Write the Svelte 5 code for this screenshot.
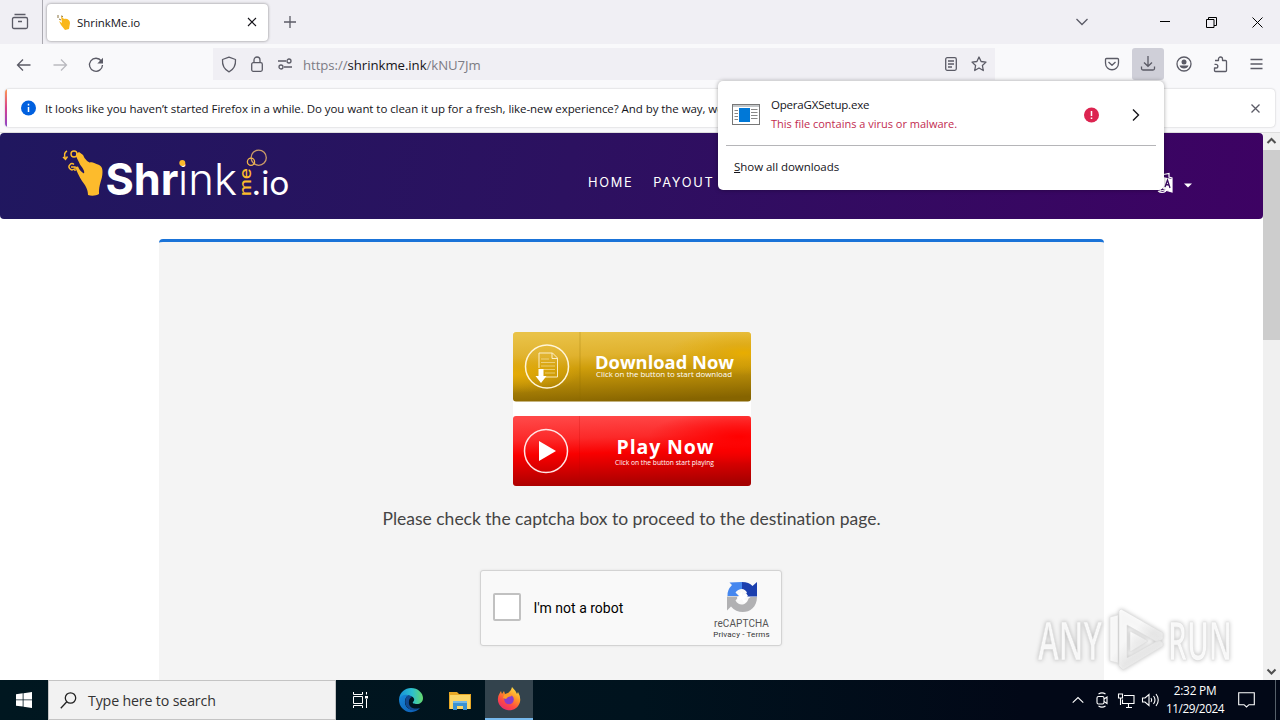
<script>
  const notice =
    "It looks like you haven’t started Firefox in a while. Do you want to clean it up for a fresh, like-new experience? And by the way, welcome back!";
  const menu = ['HOME', 'PAYOUT'];
</script>

<div class="screen">
  <div class="tabs">
    <div class="view">
      <svg width="18" height="18" viewBox="0 0 18 18" class="ic"><path d="M3.5 1.5h11M3 4.5h12q1.500 0 1.500 1.500v8q0 1.500-1.500 1.500H3q-1.500 0-1.500-1.500V6q0-1.500 1.500-1.500zM7 8.500h4" /></svg>
    </div>
    <div class="tab">
      <svg width="14" height="16" viewBox="0 0 14 16"><path d="M1 4V1M4 2l2 .5M2 5l2 1" stroke="#8a7440" stroke-width="1" fill="none" /><path d="M4 2l3 3c3-1 6 1 6 4l-1 6-4 1-4-5-2-4 3 2z" fill="#f9b719" /></svg>
      <span class="tabname">ShrinkMe.io</span>
      <svg width="10" height="10" viewBox="0 0 10 10" class="dark"><path d="M1 1l8 8M9 1L1 9" /></svg>
    </div>
    <svg class="plus ic" width="12" height="12" viewBox="0 0 12 12"><path d="M6 0v12M0 6h12" /></svg>
    <div class="grow"></div>
    <svg class="chev ic" width="14" height="8" viewBox="0 0 14 8"><path d="M1.500 1l5.500 5.500L12.500 1" /></svg>
    <svg class="min blk" width="10" height="10" viewBox="0 0 10 10"><path d="M0 4.500h10" /></svg>
    <svg class="restore blk" width="11" height="11" viewBox="0 0 11 11"><path d="M.5 2.500h7.500v8H.5zM2.500 2.500V.5h8v8H8" /></svg>
    <svg class="close blk" width="11" height="11" viewBox="0 0 11 11"><path d="M.5.5l10 10M10.500.5l-10 10" /></svg>
  </div>

  <div class="bar">
    <svg class="back ic" width="16" height="14" viewBox="0 0 16 14"><path d="M14.500 7H1.500M7 1.500L1.500 7 7 12.500" /></svg>
    <svg class="fwd ic" width="16" height="14" viewBox="0 0 16 14"><path d="M1.500 7h13M9 1.500L14.500 7 9 12.500" /></svg>
    <svg class="reload ic" width="16" height="16" viewBox="0 0 16 16"><path d="M13.300 4A6.500 6.500 0 1 0 14.500 8" /><path d="M15 .8v5.700H9.300z" fill="#5b5b66" stroke="none" /></svg>
    <div class="url">
      <svg width="16" height="17" viewBox="0 0 16 17" class="ic"><path d="M8 1.200l6.500 2.300c.4 5.500-1.500 9.800-6.500 12.300C3 13.300 1.100 9 1.500 3.500z" stroke-linejoin="round" /></svg>
      <svg width="12" height="16" viewBox="0 0 12 16" class="ic lock"><rect x=".7" y="6.700" width="10.600" height="8.600" rx="1.500" /><path d="M3 6.500V4a3 3 0 0 1 6 0v2.500" /></svg>
      <svg width="16" height="12" viewBox="0 0 16 12" class="ic perm"><path d="M1 3h8M7 9h8" /><circle cx="12" cy="3" r="2" /><circle cx="4" cy="9" r="2" /></svg>
      <span class="address">https://<b>shrinkme.ink</b>/kNU7Jm</span>
      <div class="grow"></div>
      <svg width="12" height="14" viewBox="0 0 12 14" class="ic"><rect x=".7" y=".7" width="10.600" height="12.600" rx="1.500" /><path d="M3 4h6M3 7h6M3 10h4" /></svg>
      <svg width="16" height="16" viewBox="0 0 16 16" class="ic star"><path d="M8 1l2.100 4.500 4.900.6-3.600 3.400.9 5L8 12l-4.300 2.500.9-5L1 6.100l4.900-.6z" stroke-linejoin="round" /></svg>
    </div>
    <div class="tools">
      <svg width="16" height="14" viewBox="0 0 16 14" class="ic"><path d="M2.500 1.500h11q1 0 1 1V6c0 9-13 9-13 0V2.500q0-1 1-1zM4.500 5L8 8.300 11.500 5" stroke-linejoin="round" /></svg>
      <div class="dl"><svg width="16" height="16" viewBox="0 0 16 16" class="ic"><path d="M8 0v10M4 6.500l4 3.800 4-3.800M1.500 10.500v2q0 1.500 1.500 1.500h10q1.500 0 1.500-1.500v-2" /></svg></div>
      <svg width="16" height="16" viewBox="0 0 16 16" class="ic user"><circle cx="8" cy="8" r="7" /><circle cx="8" cy="6" r="2.500" fill="#5b5b66" stroke="none" /><path d="M3.500 9.500h9c-.8 4-8.200 4-9 0z" fill="#5b5b66" stroke="none" /></svg>
      <svg width="15" height="16" viewBox="0 0 15 16" class="ic ext"><path d="M2 4.500h3.500V3a2 2 0 0 1 4 0v1.500h3q1 0 1 1v9q0 1-1 1H2.500q-1 0-1-1V12H3a1.700 1.700 0 0 0 0-3.700H1.500" stroke-linejoin="round" /></svg>
      <svg width="13" height="11" viewBox="0 0 13 11" class="ic burger"><path d="M.5 .5h12M.5 5h12M.5 9.500h12" /></svg>
    </div>
  </div>

  <div class="info">
    <div class="note">
      <svg width="16" height="16" viewBox="0 0 16 16"><circle cx="8.500" cy="8" r="7.500" fill="#0060df" /><path d="M8.500 7v5M8.500 3.800v1.600" stroke="#fff" stroke-width="1.500" /></svg>
      <span class="notetext">{notice}</span>
      <svg class="noteclose ic" width="9" height="9" viewBox="0 0 9 9"><path d="M.5.5l8 8M8.500.5l-8 8" /></svg>
    </div>
  </div>

  <div class="viewport">
    <div class="site">
      <header>
        <svg class="logo" width="228" height="50" viewBox="0 0 228 50">
          <path d="M14 5L17 3q4 2 5.500 6 2 3 5 4.500c3-1 5 .5 7 1.500 4 1 6 3 6 8 0 8-4 12-3.500 22-3 2-8 2-11 1 0-6-3-10-6-14-3-5-5-9-7-14l3-.5q2 5 6 7c1-2-1-5-4-9-2-5-4-7-4-10z" fill="#fdbb2c" />
          <g fill="none" stroke="#fdbb2c" stroke-width="1.400"><circle cx="12" cy="5" r="3" /><path d="M5 2Q1 4 3.500 10M1 8l2.500 2.500 2-3M12 15.500a3 3 0 1 0 0 4.500M9 18h4v4" /></g>
          <text x="43.500" y="46" class="ls" textLength="73" lengthAdjust="spacingAndGlyphs">Shr</text>
          <text x="116" y="46" class="lt" textLength="59" lengthAdjust="spacingAndGlyphs">ink</text>
          <circle cx="120.300" cy="14" r="3" fill="#fdbb2c" />
          <text class="me" transform="translate(188.500 47) rotate(-90)" textLength="28" lengthAdjust="spacingAndGlyphs">me</text>
          <text x="189.500" y="46" class="lio" textLength="38" lengthAdjust="spacingAndGlyphs">.io</text>
          <g fill="none" stroke="#c99a68" stroke-width="1.300"><circle cx="196.700" cy="8.700" r="7.600" /><circle cx="189" cy="12.700" r="3.600" stroke="#f4b74a" /></g>
        </svg>
        <nav>{#each menu as m}<span>{m}</span>{/each}</nav>
        <div class="lang">
          <svg width="22" height="21" viewBox="0 0 22 21"><path d="M10 2l8-1.500V4l3 1v14l-7-2-5 1zM7 18q4 3 8 0" fill="none" stroke="#fff" stroke-width="1.200" /><path d="M12 4l9 2v13l-9-3z" fill="#fff" /><path d="M14 14l2.500-7 2.500 8M15 11.500l3 .7" fill="none" stroke="#3a0a62" stroke-width="1.300" /></svg>
          <svg class="caret" width="8" height="5" viewBox="0 0 8 5"><path d="M0 .5h8L4 4.500z" fill="#fff" /></svg>
        </div>
      </header>

      <main>
        <div class="buttons">
          <svg width="238" height="70" viewBox="0 0 238 70">
            <defs>
              <linearGradient id="gold" x1=".35" y1="0" x2=".5" y2="1"><stop offset="0" stop-color="#e9c247" /><stop offset=".32" stop-color="#e0b22e" /><stop offset=".5" stop-color="#cf9e0b" /><stop offset="1" stop-color="#866400" /></linearGradient>
              <radialGradient id="goldglow" cx=".97" cy=".3" r=".32"><stop offset="0" stop-color="#e8ad00" /><stop offset=".4" stop-color="#dea607" stop-opacity=".55" /><stop offset="1" stop-color="#e8ad00" stop-opacity="0" /></radialGradient>
              <radialGradient id="goldleft" cx="0" cy=".6" r=".28"><stop offset="0" stop-color="#e7ad08" stop-opacity=".9" /><stop offset="1" stop-color="#e7ad08" stop-opacity="0" /></radialGradient>
              <linearGradient id="red" x1=".4" y1="0" x2=".5" y2="1"><stop offset="0" stop-color="#ff4747" /><stop offset=".3" stop-color="#fc2929" /><stop offset=".52" stop-color="#f90000" /><stop offset="1" stop-color="#a50000" /></linearGradient>
              <radialGradient id="redglow" cx=".95" cy=".3" r=".38"><stop offset="0" stop-color="#f00" /><stop offset=".4" stop-color="#f00" stop-opacity=".6" /><stop offset="1" stop-color="#f00" stop-opacity="0" /></radialGradient>
            </defs>
            <rect width="238" height="69.500" rx="3" fill="url(#gold)" /><rect width="238" height="69.500" rx="3" fill="url(#goldglow)" /><rect width="238" height="69.500" rx="3" fill="url(#goldleft)" />
            <path d="M67 0v69" stroke="#8c6900" stroke-opacity=".3" />
            <g fill="none" stroke="#fff5d8"><circle cx="34" cy="34.500" r="21.500" stroke-width="1.500" /><path d="M26 36V21h13.500l5 5v19H32M39 21v5.500h5" stroke-width=".9" /><path d="M28 27h8M28 30.500h14M28 34h14M29 37.500h13M32 41h10" stroke-width=".7" opacity=".7" /></g>
            <path d="M25.500 37h5v7h3l-5.500 7-5.500-7h3z" fill="#fff" />
            <text x="82" y="37" class="bt" textLength="139" lengthAdjust="spacingAndGlyphs">Download Now</text>
            <text x="83" y="45" class="bs" textLength="136" lengthAdjust="spacingAndGlyphs">Click on the button to start download</text>
          </svg>
          <svg width="238" height="70" viewBox="0 0 238 70">
            <rect width="238" height="70" rx="3" fill="url(#red)" /><rect width="238" height="70" rx="3" fill="url(#redglow)" />
            <path d="M66.500 0v70" stroke="#b00" stroke-opacity=".2" />
            <circle cx="33" cy="35" r="21.500" fill="none" stroke="#ffe5e5" stroke-width="1.500" />
            <path d="M26 25l17 10-17 10z" fill="#fff" />
            <text x="103.500" y="38" class="bt play" textLength="97">Play Now</text>
            <text x="102" y="49" class="bs" textLength="99" lengthAdjust="spacingAndGlyphs">Click on the button start playing</text>
          </svg>
        </div>
        <p>Please check the captcha box to proceed to the destination page.</p>
        <div class="captcha">
          <div class="box"></div>
          <span class="robot">I'm not a robot</span>
          <div class="grow"></div>
          <div class="brand">
            <svg width="32" height="32" viewBox="0 0 32 32">
              <path d="M16 1v7a8 8 0 0 0-6.500 3.500L13 15H1.500Q1 9 6 4L3.500 1.500z" fill="#4587ef" />
              <path d="M16 1c5 0 8 1.500 10.500 4L31 1v14.500H17l4-4Q19 8 16 8z" fill="#1b3fae" />
              <path d="M1 15.500h12l-3.500 4c3 6 11 5.500 13-2l2-1.500H31c0 16-18 19.500-26 9.500l-4 4z" fill="#b1b1b3" />
              <path d="M12 13l4-2v4l4-3 2 3-4 3 3 2-3 2-2-4-4 2-1-4 3-1z" fill="#fff" />
            </svg>
            <span class="re">reCAPTCHA</span>
            <span class="pt">Privacy - Terms</span>
          </div>
        </div>
      </main>
    </div>
    <div class="scroll">
      <svg width="17" height="17" viewBox="0 0 17 17"><path d="M4.500 10l4-4 4 4" fill="none" stroke="#505050" stroke-width="2" /></svg>
      <div class="thumb"></div>
      <div class="grow"></div>
      <svg width="17" height="17" viewBox="0 0 17 17"><path d="M4.500 6.500l4 4 4-4" fill="none" stroke="#505050" stroke-width="2" /></svg>
    </div>
  </div>

  <div class="taskbar">
    <div class="start"><svg width="16" height="16" viewBox="0 0 16 16"><path d="M0 2.300L6.700 1.300v6.200H0zM7.500 1.200L16 0v7.500H7.500zM0 8.300h6.700v6.300L0 13.700zM7.500 8.300H16V16l-8.500-1.300z" fill="#fff" /></svg></div>
    <div class="search">
      <svg width="17" height="17" viewBox="0 0 17 17"><circle cx="10.500" cy="6" r="5.200" /><path d="M6.800 9.800L.8 16.200" /></svg>
      <span>Type here to search</span>
    </div>
    <div class="app">
      <svg width="18" height="16" viewBox="0 0 18 16" fill="none" stroke="#fff"><path d="M1.500 0v2.500h9V0M1.500 16v-2.500h9V16M1.500 4.500h9v7h-9zM14.500 0v2.500M14.500 7v9" /><path d="M13 4h3v2.500h-3z" fill="#fff" stroke="none" /></svg>
    </div>
    <div class="app edgeapp">
      <svg width="24" height="24" viewBox="0 0 24 24">
        <defs><linearGradient id="e1" x1="0" y1=".3" x2="1" y2=".3"><stop offset="0" stop-color="#168fd8" /><stop offset=".55" stop-color="#2cc0cf" /><stop offset="1" stop-color="#65d96c" /></linearGradient><linearGradient id="e2" y2="1"><stop offset="0" stop-color="#1687d9" /><stop offset="1" stop-color="#0d5bb2" /></linearGradient></defs>
        <path d="M0 11C1 4 6 0 12 0c7 0 12 5 12 10 0 4-3 6-6 6-3 0-5-1-4-2 3-3 0-6-4-6-5 0-8 2-10 3z" fill="url(#e1)" />
        <path d="M0 11c2-4 6-5 9-4-3 3-4 7-2 11 3 5 9 4 14 2-4 5-13 6-18 0C1 18 0 15 0 11z" fill="url(#e2)" />
        <path d="M9 7c-3 3-4 8-1 12 4 5 10 3 13 1-7 2-12-1-11-7 0-2 1-3 3-4-1-1-2-2-4-2z" fill="#124a91" />
      </svg>
    </div>
    <div class="app">
      <svg width="22" height="19" viewBox="0 0 22 19"><path d="M0 1h8l2 2h12v15H0z" fill="#e8a825" /><path d="M1 4h20v14H1z" fill="#fbd667" /><path d="M4 11h14v8h-4v-4H8v4H4z" fill="#3a92d2" /><path d="M4 10h14v2H4z" fill="#76b9e6" /></svg>
    </div>
    <div class="app on">
      <svg width="24" height="24" viewBox="0 0 24 24">
        <defs><linearGradient id="f1" x1=".8" y1="0" x2=".2" y2="1"><stop offset="0" stop-color="#ffe647" /><stop offset=".38" stop-color="#ff9426" /><stop offset=".68" stop-color="#ff4b42" /><stop offset="1" stop-color="#e72673" /></linearGradient></defs>
        <path d="M15 0q4 4 5 7l1-2q3 5 2 10c-2 7-8 9-13 8S0 17 1 11c0-3 2-5 3-7l1 3 2-3 1 3c4-1 6-3 7-7z" fill="url(#f1)" />
        <circle cx="12" cy="12.500" r="4.800" fill="#8b3cc9" /><path d="M7 8q3-2 6-1l2 2-4 1-2 2-3-1z" fill="#ff9b28" />
      </svg>
    </div>
    <div class="grow"></div>
    <div class="tray">
      <svg width="12" height="8" viewBox="0 0 12 8"><path d="M.7 6.700L6 1.500l5.300 5.200" /></svg>
      <svg width="12" height="16" viewBox="0 0 12 16"><path d="M2.500 2Q6-.3 9.500 2M2.500 14Q6 16.300 9.500 14" /><rect x="1" y="4.500" width="7" height="7.500" rx="1.500" /><path d="M8 7l3-2v6.500L8 9.500" /></svg>
      <svg width="17" height="15" viewBox="0 0 17 15"><path d="M6 2.500h10v8H4.500v-4M8 14.500h6M10.500 10.500v4M.5 1h4v4h-4zM2.500 5v7" /></svg>
      <svg width="17" height="14" viewBox="0 0 17 14"><path d="M.5 5h2.500L7 1.500v11L3 9H.5zM9 5q1.500 2 0 4M11.500 3q3 4 0 8M14 1q4.500 6 0 12" /></svg>
    </div>
    <div class="clock"><span class="time">2:32 PM</span><span class="date">11/29/2024</span></div>
    <svg class="action" width="17" height="16" viewBox="0 0 17 16"><path d="M.7.700h15.600v12h-5.300L8.500 15 6 12.700H.7z" /></svg>
    <div class="peek"></div>
  </div>

  <div class="popup">
    <div class="item">
      <svg width="28" height="21" viewBox="0 0 28 21"><rect x=".5" y=".5" width="27" height="20" fill="#fff" stroke="#777" /><path d="M1 2h26" stroke="#c4c7c9" stroke-width="2" /><rect x="7" y="4" width="11" height="14" fill="#0078d7" /><path d="M2.500 6.500H6M2.500 9.500H6M2.500 12.500H6M2.500 15.500H6M19 5.500h6.500M19 8.500h6.500M19 11.500h6.500M19 14.500h6.500" stroke="#888" /></svg>
      <div class="file"><span class="name">OperaGXSetup.exe</span><span class="warn">This file contains a virus or malware.</span></div>
      <div class="grow"></div>
      <svg class="alert" width="16" height="16" viewBox="0 0 16 16"><circle cx="7.500" cy="8" r="7.500" fill="#dc2450" /><path d="M7.500 4v5M7.500 10.500V12" stroke="#fff" stroke-width="1.500" /></svg>
      <svg width="8" height="14" viewBox="0 0 8 14"><path d="M1 1.500L6.500 7 1 12.500" fill="none" stroke="#15141a" stroke-width="1.400" /></svg>
    </div>
    <div class="all"><u>S</u>how all downloads</div>
  </div>

  <div class="mark">
    <svg width="202" height="68" viewBox="0 0 202 68">
      <defs><linearGradient id="mk" y2="1"><stop offset=".4" stop-color="#fff" /><stop offset=".6" stop-color="#ececec" /></linearGradient></defs>
      <g class="mk"><text x="3" y="53" textLength="64" lengthAdjust="spacingAndGlyphs">ANY</text><text x="133" y="53" textLength="64" lengthAdjust="spacingAndGlyphs">RUN</text>
      <path d="M75 10l8-2V56l-8-2zM86 2l42 24v6l-6 3-30-17v33l32-18 4 3v3L88 63l-4-4V4zM95 24l18 10-18 11z" fill="url(#mk)" /></g>
    </svg>
  </div>
</div>

<style>
  :global(body) { margin: 0; overflow: hidden; }
  .screen { position: relative; width: 1280px; height: 720px; display: flex; flex-direction: column; font-family: "Open Sans", "Noto Sans", sans-serif; font-size: 11.5px; color: #15141a; background: #fff; overflow: hidden; }
  .screen * { box-sizing: border-box; }
  svg { display: block; flex: none; overflow: visible; }
  span { white-space: nowrap; }
  .grow { flex: 1; }
  .ic { fill: none; stroke: #5b5b66; stroke-width: 1.300; }
  .dark { fill: none; stroke: #15141a; stroke-width: 1.100; }
  .blk { fill: none; stroke: #000; stroke-width: 1; }
  .tabs { height: 44px; background: #f0eff4; display: flex; align-items: center; flex: none; }
  .view { width: 43px; height: 44px; border-right: 1px solid #aaa9b0; display: flex; align-items: center; padding-left: 11px; }
  .tab { width: 221px; height: 37px; margin-left: 4px; background: #fff; border-radius: 4px; box-shadow: 0 0 3px rgba(0, 0, 0, .45); display: flex; align-items: center; padding: 0 11px 0 10px; }
  .tabname { flex: 1; margin-left: 6px; letter-spacing: -.05px; }
  .plus { margin-left: 16px; }
  .chev { margin-right: 71px; }
  .min { margin-right: 36px; }
  .restore { margin-right: 35px; }
  .close { margin-right: 17px; }
  .bar { height: 42px; background: #f9f9fb; display: flex; align-items: center; flex: none; }
  .back { margin-left: 16px; }
  .fwd { margin-left: 20px; opacity: .4; }
  .reload { margin-left: 20px; }
  .url { margin-left: 109px; width: 782px; height: 32px; margin-top: -2px; background: #f0eff4; display: flex; align-items: center; padding: 0 8px; }
  .lock { margin-left: 14px; }
  .perm { margin-left: 14px; }
  .address { margin-left: 10px; font-size: 13.200px; color: #7c7b84; letter-spacing: -.05px; padding-top: 1px; }
  .address b { font-weight: 400; color: #15141a; }
  .star { margin-left: 14px; }
  .tools { flex: 1; display: flex; align-items: center; padding-left: 109px; margin-top: -2px; }
  .dl { width: 32px; height: 32px; margin-left: 12px; background: #cfcfd8; border-radius: 3px; display: grid; place-items: center; }
  .user { margin-left: 12px; }
  .ext { margin-left: 21px; }
  .burger { margin-left: 22px; }
  .info { height: 47px; flex: none; background: #f9f9fb; border-bottom: 1px solid #dedede; padding: 3px 5px 0 5px; }
  .note { height: 38px; background: linear-gradient(#ff9a50, #d6408f 50%, #8b45c8) left / 2px 100% no-repeat #fff; border-radius: 4px; box-shadow: 0 0 2px rgba(0, 0, 0, .25); display: flex; align-items: center; padding-left: 15px; }
  .notetext { width: 1190px; margin-left: 9px; letter-spacing: -.06px; padding-top: 1px; }
  .noteclose { margin-left: 16px; }
  .viewport { flex: 1; display: flex; min-height: 0; background: #fff; }
  .site { width: 1263px; overflow: hidden; }
  header { height: 86px; background: linear-gradient(100deg, #20175f, #2c1160 45%, #3d0263); border-radius: 4px; display: flex; align-items: flex-start; padding-left: 62px; }
  .logo { margin-top: 16px; }
  .ls, .lt, .lio { font-family: Inter, sans-serif; fill: #fff; font-size: 44px; font-weight: 700; }
  .lt { font-weight: 300; font-size: 43px; }
  .lio { font-size: 33px; font-weight: 400; }
  .me { font-family: Inter, sans-serif; font-size: 16px; font-weight: 500; fill: #fdbb2c; }
  nav { margin-left: 298px; margin-top: 41px; width: 560px; display: flex; gap: 20px; font-family: Inter, sans-serif; font-size: 12.800px; font-weight: 400; line-height: 18px; letter-spacing: 1.700px; color: #fff; }
  .lang { display: flex; align-items: center; gap: 11px; margin-top: 40px; margin-left: 3px; }
  .caret { margin-top: 3px; }
  main { width: 945px; height: 480px; margin: 20px 0 0 159px; background: #f4f4f4; border-top: 3px solid #1a73d8; border-radius: 4px 4px 0 0; display: flex; flex-direction: column; align-items: center; padding-top: 90px; }
  .buttons { background: #fff; display: flex; flex-direction: column; gap: 14px; }
  .bt { font-family: "Open Sans", sans-serif; font-weight: 700; font-size: 18.500px; fill: #fff; }
  .play { font-size: 19.500px; }
  .bs { font-family: "Open Sans", sans-serif; font-size: 7.800px; fill: #fff; }
  p { margin: 21px 0 0; line-height: 24px; font-family: Lato, sans-serif; font-size: 17.500px; font-variant-ligatures: none; color: #444; white-space: nowrap; }
  .captcha { width: 302px; height: 76px; margin: 39px 2px 0 0; background: #f9f9f9; border: 1px solid #d3d3d3; border-radius: 3px; box-shadow: 0 0 3px rgba(0, 0, 0, .08); display: flex; align-items: center; padding-left: 12px; padding-right: 7px; font-family: Roboto, sans-serif; }
  .box { width: 28px; height: 28px; border: 2px solid #c1c1c1; border-radius: 2px; background: #fff; margin-bottom: 2px; }
  .robot { margin-left: 13px; font-size: 14px; color: #000; }
  .brand { width: 64px; display: flex; flex-direction: column; align-items: center; color: #555; padding-top: 5px; }
  .re { font-size: 10px; line-height: 13px; margin-top: 4px; letter-spacing: .1px; }
  .pt { font-size: 8px; line-height: 10px; letter-spacing: .15px; color: #333; }
  .scroll { width: 17px; background: #f0f0f0; display: flex; flex-direction: column; }
  .thumb { height: 190px; background: #cdcdcd; }
  .taskbar { height: 40px; flex: none; background: linear-gradient(90deg, #001720, #00131e 50%, #020817 80%); display: flex; align-items: center; }
  .start { width: 48px; display: grid; place-items: center; }
  .search { width: 288px; height: 40px; background: #f2f2f2; border: 1px solid #c4c4c4; display: flex; align-items: center; padding-left: 11px; gap: 11px; font-size: 14.200px; color: #333; }
  .search svg { fill: none; stroke: #222; stroke-width: 1.300; }
  .search span { letter-spacing: -.15px; }
  .app { width: 48px; height: 40px; display: grid; place-items: center; margin-left: 1px; }
  .app + .edgeapp { margin-left: 2px; }
  .on { background: #33434d; border-bottom: 2px solid #76b9ed; }
  .tray { display: flex; align-items: center; gap: 12px; }
  .tray svg, .action { fill: none; stroke: #fff; stroke-width: 1.100; }
  .tray svg + svg + svg { margin-left: -2px; }
  .tray svg + svg + svg + svg { margin-left: -5px; }
  .clock { width: 72px; display: flex; flex-direction: column; align-items: center; font-size: 11.800px; line-height: 18px; color: #fff; padding-bottom: 2px; }
  .time { letter-spacing: -.2px; }
  .date { letter-spacing: -.45px; }
  .action { margin-left: 7px; margin-right: 20px; }
  .peek { width: 5px; height: 40px; border-left: 1px solid #56606a; }
  .popup { position: absolute; left: 718px; top: 81px; width: 446px; height: 109px; background: #fff; border-radius: 5px; box-shadow: 0 0 4px rgba(0, 0, 0, .35); padding: 0 8px; }
  .item { height: 65px; border-bottom: 1px solid #b5b5b8; display: flex; align-items: center; padding: 3px 16px 0 6px; }
  .file { margin-left: 11px; display: flex; flex-direction: column; line-height: 19px; margin-top: -1px; }
  .name { letter-spacing: -.2px; }
  .warn { color: #c22b50; font-size: 11px; letter-spacing: 0; }
  .alert { margin-right: 32px; }
  .all { line-height: 18px; padding: 12px 8px; letter-spacing: -.05px; }
  .mark { position: absolute; left: 1035px; top: 607px; filter: drop-shadow(0 0 2px rgba(0, 0, 0, .28)); }
  .mk { fill: #fff; fill-opacity: .85; stroke: #ddd; stroke-width: .6; font-family: "Open Sans", sans-serif; font-weight: 600; font-size: 52px; }
</style>
